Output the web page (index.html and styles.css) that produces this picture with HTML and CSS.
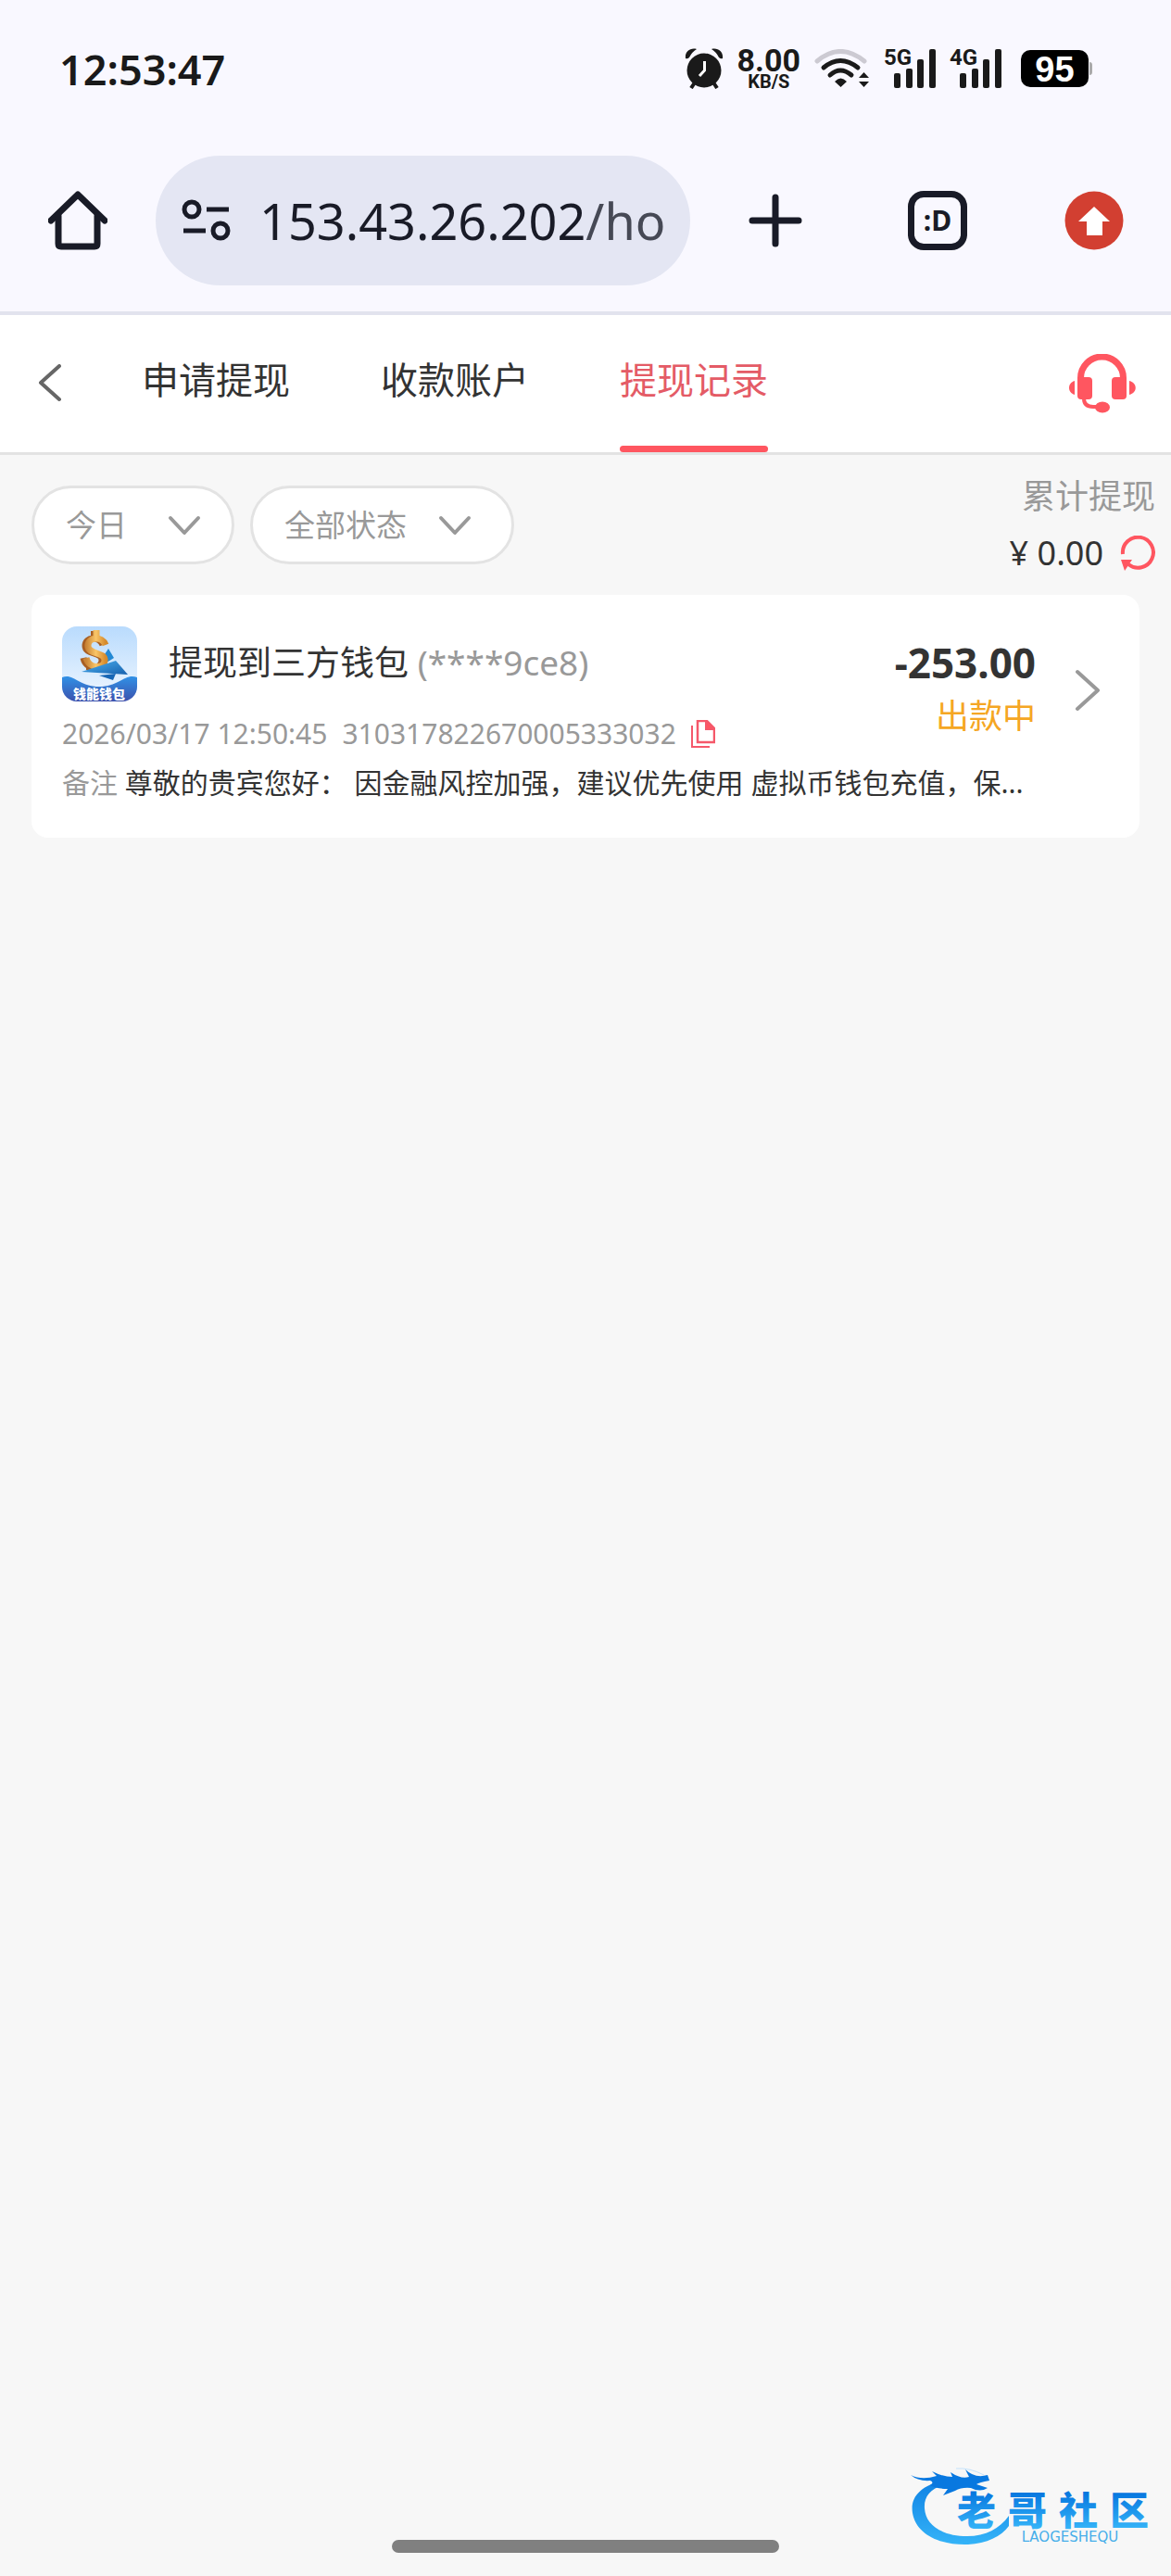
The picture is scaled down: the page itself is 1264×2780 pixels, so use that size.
FILE: index.html
```html
<!DOCTYPE html>
<html lang="zh-CN">
<head>
<meta charset="utf-8">
<meta name="viewport" content="width=device-width">
<title>提现记录</title>
<link rel="stylesheet" href="styles.css">
</head>
<body>
	<div class="statusbar">
		<span class="clock">12:53:47</span>
		<div class="statusIcons">
			<svg width="42" height="44" viewBox="0 0 42 44" fill="#1a1a1a">
				<circle cx="21" cy="24" r="18.5"/>
				<path d="M1 11C0 4 6-1 13 1Q8 4 5 10Q3 12 1 11ZM41 11C42 4 36-1 29 1Q34 4 37 10Q39 12 41 11Z"/>
				<path d="M11 37L7 43M31 37L35 43" stroke="#1a1a1a" stroke-width="4"/>
				<path d="M21.500 14V24L16 30" fill="none" stroke="#fff" stroke-width="3"/>
			</svg>
			<div class="netspeed"><b>8.00</b><span>KB/S</span></div>
			<svg class="wifi" width="60" height="42" viewBox="0 0 60 42" fill="none" stroke-width="5" stroke-linecap="round">
				<path d="M3 13Q28-8 54 13" stroke="#cccad2"/>
				<path d="M10 20Q28 5 47 20M17 28Q28 18 40 28" stroke="#1a1a1a"/>
				<path d="M22 35Q28.500 28 35 35L28.500 41ZM48 31L53.500 25L59 31ZM48 35L53.500 41L59 35Z" fill="#1a1a1a"/>
			</svg>
			<div class="signal">
				<span>5G</span>
				<svg width="56" height="44" viewBox="0 0 56 44" fill="#1a1a1a">
					<rect x="11" y="27" width="7" height="16" rx="2"/><rect x="24" y="22" width="7" height="21" rx="2"/>
					<rect x="36" y="12" width="7" height="31" rx="2"/><rect x="49" y="1" width="7" height="42" rx="2"/>
				</svg>
			</div>
			<div class="signal">
				<span>4G</span>
				<svg width="56" height="44" viewBox="0 0 56 44" fill="#1a1a1a">
					<rect x="11" y="27" width="7" height="16" rx="2"/><rect x="24" y="22" width="7" height="21" rx="2"/>
					<rect x="36" y="12" width="7" height="31" rx="2"/><rect x="49" y="1" width="7" height="42" rx="2"/>
				</svg>
			</div>
			<div class="battery">95</div>
		</div>
	</div>

	<div class="toolbar">
		<button class="iconButton" type="button" aria-label="主页">
			<svg width="64" height="64" viewBox="0 0 64 64" fill="none" stroke="#191b27" stroke-width="7" stroke-linejoin="round" stroke-linecap="round">
				<path d="M3 32L32 4L61 32"/><path d="M11 27V57Q11 60 14 60H50Q53 60 53 57V27"/>
			</svg>
		</button>
		<div class="address">
			<svg width="54" height="46" viewBox="0 0 54 46" fill="none" stroke="#191b27" stroke-width="5">
				<circle cx="11" cy="11" r="8"/><path d="M27 11H51M2 34H26"/><circle cx="42" cy="34" r="8"/>
			</svg>
			<a class="url" href="#">153.43.26.202<span>/ho</span></a>
		</div>
		<button class="iconButton plus" type="button" aria-label="新标签页">
			<svg width="64" height="64" viewBox="0 0 64 64" stroke="#191b27" stroke-width="7" stroke-linecap="round">
				<path d="M7 32H57M32 7V57"/>
			</svg>
		</button>
		<button class="iconButton tabs" type="button">:D</button>
		<button class="iconButton" type="button" aria-label="更新">
			<svg width="64" height="64" viewBox="0 0 64 64">
				<circle cx="32" cy="32" r="31.500" fill="#d23f31"/>
				<path d="M32 17L49 33H41V48H24V33H15Z" fill="#fff"/>
			</svg>
		</button>
	</div>

	<nav class="nav">
		<button class="iconButton back" type="button" aria-label="返回">
			<svg width="26" height="42" viewBox="0 0 26 42" fill="none" stroke="#666" stroke-width="4" stroke-linecap="round" stroke-linejoin="round">
				<path d="M23 2L3 20L23 38"/>
			</svg>
		</button>
		<div class="navLinks">
			<a href="#">申请提现</a>
			<a href="#">收款账户</a>
			<a class="active" href="#">提现记录</a>
		</div>
		<button class="iconButton" type="button" aria-label="客服">
			<svg width="72" height="64" viewBox="0 0 72 64" fill="#ff5660">
				<path d="M12.500 30V26A23 23 0 0 1 58.500 26V30" fill="none" stroke="#ff5660" stroke-width="7"/>
				<rect x="9" y="25" width="16" height="24" rx="4"/>
				<rect x="46" y="25" width="16" height="24" rx="4"/>
				<path d="M6 29V44C-2 42-2 31 6 29ZM65 29V44C74 42 74 31 65 29Z"/>
				<path d="M16 48Q16 57 26 57H32" fill="none" stroke="#ff5660" stroke-width="4"/>
				<ellipse cx="36" cy="57.500" rx="8" ry="6"/>
			</svg>
		</button>
	</nav>

	<main>
		<section class="filters">
			<div class="pills">
				<label class="pill day">
					<select aria-label="日期"><option>今日</option></select>
					<svg width="36" height="24" viewBox="0 0 36 24"><path d="M3 3L18 19L33 3"/></svg>
				</label>
				<label class="pill state">
					<select aria-label="状态"><option>全部状态</option></select>
					<svg width="36" height="24" viewBox="0 0 36 24"><path d="M3 3L18 19L33 3"/></svg>
				</label>
			</div>
			<div class="total">
				<span class="totalLabel">累计提现</span>
				<div class="totalSum">
					<span>¥ 0.00</span>
					<button class="iconButton" type="button" aria-label="刷新">
						<svg width="38" height="38" viewBox="0 0 38 38">
							<path d="M3 20A16.500 16.500 0 1 1 9 31" fill="none" stroke="#ff5660" stroke-width="4"/>
							<path d="M1 26H13L5 38Z" fill="#ff5660"/>
						</svg>
					</button>
				</div>
			</div>
		</section>

		<article class="record">
			<div class="recordBody">
				<div class="recordHead">
					<svg width="81" height="81" viewBox="0 0 81 81">
						<defs>
							<linearGradient id="sky" x1="0" y1="0" x2="0" y2="1"><stop offset="0" stop-color="#b9dbfd"/><stop offset="1" stop-color="#f0f7ff"/></linearGradient>
							<linearGradient id="sea" x1="0" y1="0" x2="0" y2="1"><stop offset="0" stop-color="#3191e6"/><stop offset="1" stop-color="#3c51ad"/></linearGradient>
							<linearGradient id="gold" x1="0" y1="0" x2="1" y2="0"><stop offset="0" stop-color="#c98436"/><stop offset=".5" stop-color="#f9c568"/><stop offset="1" stop-color="#d58a2c"/></linearGradient>
							<linearGradient id="sail" x1="0" y1="0" x2="1" y2="1"><stop offset="0" stop-color="#4cb2f2"/><stop offset="1" stop-color="#1660ad"/></linearGradient>
							<clipPath id="tile"><rect width="81" height="81" rx="16"/></clipPath>
						</defs>
						<g clip-path="url(#tile)">
							<rect width="81" height="81" fill="url(#sky)"/>
							<path d="M50 24L56 34L34 48Z" fill="#2389d4"/>
							<path d="M40 53L58 51L55 58Z" fill="#1666b5"/>
							<path d="M34 5V12M29 43V47" stroke="#a85f24" stroke-width="6"/>
							<path d="M44 20C40 10 25 11 25 21C25 31 44 27 43 37C42 46 26 48 23 34" fill="none" stroke="#a85f24" stroke-width="7"/>
							<path d="M37 4V13M47 20C43 10 28 11 28 21C28 31 47 27 46 37C45 46 29 46 26 34" fill="none" stroke="url(#gold)" stroke-width="7"/>
							<path d="M21 49L58 37L71 52Z" fill="url(#sail)"/>
							<path d="M0 55C12 50 18 65 40 65C62 65 68 50 81 55V81H0Z" fill="url(#sea)"/>
							<text class="tileName" x="40" y="78">钱能钱包</text>
						</g>
					</svg>
					<h2>提现到三方钱包 <span>(****9ce8)</span></h2>
				</div>
				<div class="recordMeta">
					<time>2026/03/17 12:50:45</time>
					<span>310317822670005333032</span>
					<button class="iconButton" type="button" aria-label="复制">
						<svg width="26" height="30" viewBox="0 0 26 30" fill="none" stroke="#f5586a" stroke-width="2">
							<path d="M7 1H17L25 9V24H7Z" stroke-width="2.500"/>
							<path d="M16 1L25 10H16Z" fill="#ff5660"/><path d="M1 6V29H20"/>
						</svg>
					</button>
				</div>
				<div class="recordAmount">
					<strong>-253.00</strong>
					<span>出款中</span>
				</div>
				<p class="recordNote"><span>备注</span> 尊敬的贵宾您好： 因金融风控加强，建议优先使用 虚拟币钱包充值，保...</p>
			</div>
			<button class="iconButton more" type="button" aria-label="详情">
				<svg width="28" height="46" viewBox="0 0 28 46" fill="none" stroke="#999" stroke-width="4" stroke-linecap="round" stroke-linejoin="round">
					<path d="M3 3L25 23L3 43"/>
				</svg>
			</button>
		</article>
	</main>

	<div class="handle"></div>

	<svg class="brand" width="264" height="92" viewBox="0 0 264 92">
		<defs>
			<linearGradient id="wave" gradientUnits="userSpaceOnUse" x1="0" y1="4" x2="0" y2="88"><stop offset="0" stop-color="#0878e0"/><stop offset="1" stop-color="#35b4f8"/></linearGradient>
			<linearGradient id="ink" gradientUnits="userSpaceOnUse" x1="0" y1="32" x2="0" y2="70"><stop offset="0" stop-color="#0878e0"/><stop offset="1" stop-color="#35b4f8"/></linearGradient>
		</defs>
		<path d="M42 16C14 22 0 34 3 53C7 77 34 88 63 87C83 86 99 78 107 67V56C97 70 82 78 62 78C35 78 17 66 16 48C15 34 24 24 46 20Z" fill="url(#wave)"/>
		<path d="M1 12Q13 18 29 13L24 8Q36 14 46 14L44 9Q56 17 64 14L60 6Q70 16 84 12L86 18Q75 20 72 22L84 26Q76 31 66 26Q56 25 49 29L36 34L41 27Q28 27 22 23Q27 20 22 18Q9 19 1 12Z" fill="#0878e0"/>
		<path d="M50 5Q65 4 80 12" fill="none" stroke="#c4e2fb"/>
		<g class="brandName">
			<text x="72" y="66">老</text><text x="127" y="66">哥</text><text x="182" y="66">社</text><text x="237" y="66">区</text>
		</g>
		<text class="brandSub" x="173" y="84">LAOGESHEQU</text>
	</svg>
</body>
</html>
```

FILE: styles.css
```css
*{
	box-sizing:border-box;
}
body{
	margin:0;
	min-height:100vh;
	display:flex;
	flex-direction:column;
	position:relative;
	background-color:#f7f7f7;
	color:#333;
	font-family:"Noto Sans", "Noto Sans CJK SC", sans-serif;
}
svg{
	display:block;
	flex-shrink:0;
}
a{
	color:inherit;
	text-decoration:none;
}
.iconButton{
	display:block;
	flex-shrink:0;
	padding:0;
	border:0;
	background:none;
	font-family:inherit;
}

/* phone status bar */
.statusbar{
	display:flex;
	justify-content:space-between;
	align-items:center;
	height:148px;
	padding:0 89px 0 64px;
	background-color:#f9f8ff;
	color:#1a1a1a;
}
.clock{
	font-size:45px;
	font-weight:600;
}
.statusIcons{
	display:flex;
	align-items:center;
	gap:15px;
}
.netspeed{
	display:flex;
	flex-direction:column;
	align-items:center;
	font-family:Roboto, sans-serif;
	font-weight:700;
	font-size:20px;
	line-height:18px;
}
.netspeed b{
	font-size:34px;
	font-weight:700;
	line-height:28px;
}
.signal{
	position:relative;
}
.signal span{
	position:absolute;
	left:0;
	top:0;
	font-family:Roboto, sans-serif;
	font-size:24px;
	font-weight:700;
	line-height:20px;
}
.battery{
	position:relative;
	width:73px;
	height:40px;
	margin-left:6px;
	border-radius:10px;
	background-color:#000;
	color:#fff;
	font-family:"Liberation Sans", sans-serif;
	font-size:38px;
	font-weight:700;
	line-height:42px;
	text-align:center;
}
.battery::after{
	content:"";
	position:absolute;
	left:74px;
	top:13px;
	width:3px;
	height:14px;
	border-radius:0 3px 3px 0;
	background-color:#aaa;
}

/* browser toolbar */
.toolbar{
	display:flex;
	align-items:center;
	padding:20px 51px 28px 52px;
	border-bottom:4px solid #e2e3ee;
	background-color:#f9f8ff;
}
.address{
	display:flex;
	align-items:center;
	flex:1;
	min-width:0;
	height:140px;
	margin:0 60px 0 52px;
	padding:0 26px 0 28px;
	gap:30px;
	border-radius:70px;
	background-color:#e4e6f3;
	color:#191b27;
	overflow:hidden;
}
.url{
	font-size:54px;
	white-space:nowrap;
}
.url span{
	color:#464955;
}
.plus{
	margin-right:111px;
}
.tabs{
	width:64px;
	height:64px;
	margin-right:105px;
	border:7px solid #191b27;
	border-radius:17px;
	color:#191b27;
	font-size:30px;
	font-weight:700;
	line-height:48px;
}

/* page tabs */
.nav{
	display:flex;
	align-items:center;
	height:151px;
	padding:0 38px 0 41px;
	border-bottom:3px solid #e3e3e3;
	background-color:#fff;
}
.navLinks{
	display:flex;
	flex:1;
	align-self:stretch;
	gap:98px;
	margin-left:86px;
}
.navLinks a{
	padding-bottom:1px;
	border-bottom:7px solid transparent;
	font-size:40px;
	line-height:140px;
}
.navLinks .active{
	position:relative;
	color:#e45b66;
}
.navLinks .active::after{
	content:"";
	position:absolute;
	left:0;
	right:0;
	bottom:-7px;
	height:7px;
	border-radius:4px;
	background-color:#ff5660;
}

/* filters and total */
.filters{
	display:flex;
	justify-content:space-between;
	align-items:flex-start;
	padding:14px 17px 0 34px;
}
.pills{
	display:flex;
	gap:17px;
	padding-top:19px;
}
.pill{
	position:relative;
	display:block;
}
.pill select{
	width:100%;
	height:85px;
	padding:0 0 0 34px;
	appearance:none;
	border:3px solid #e3e3e3;
	border-radius:43px;
	background-color:#fff;
	color:#999;
	font-family:inherit;
	font-size:33px;
}
.day{
	width:219px;
}
.state{
	width:285px;
}
.pill svg{
	position:absolute;
	right:36px;
	top:32px;
	fill:none;
	stroke:#999;
	stroke-width:4;
	stroke-linecap:round;
	stroke-linejoin:round;
	pointer-events:none;
}
.state svg{
	right:46px;
}
.total{
	display:flex;
	flex-direction:column;
	align-items:flex-end;
	font-size:36px;
	line-height:61px;
}
.totalLabel{
	color:#999;
}
.totalSum{
	display:flex;
	align-items:center;
	gap:18px;
}

/* record card */
.record{
	display:flex;
	align-items:flex-start;
	gap:42px;
	margin:15px 34px 0;
	padding:34px 42px 39px 33px;
	border-radius:18px;
	background-color:#fff;
}
.recordBody{
	display:grid;
	grid-template-columns:1fr auto;
	grid-template-areas:"head amount" "meta amount" "note note";
	flex:1;
	min-width:0;
}
.recordHead{
	grid-area:head;
	display:flex;
	align-items:center;
	gap:34px;
}
.recordHead h2{
	margin:0;
	font-size:37px;
	font-weight:400;
	line-height:40px;
	padding-bottom:4px;
}
.recordHead h2 span{
	color:#999;
}
.tileName{
	fill:#fff;
	font-size:14px;
	font-weight:900;
	text-anchor:middle;
}
.recordMeta{
	grid-area:meta;
	display:flex;
	align-items:center;
	gap:16px;
	margin-top:15px;
	color:#999;
	font-size:30px;
	line-height:40px;
}
.recordAmount{
	grid-area:amount;
	display:flex;
	flex-direction:column;
	align-items:flex-end;
	padding-top:10px;
	font-size:36px;
	line-height:58px;
}
.recordAmount strong{
	font-size:44px;
}
.recordAmount span{
	color:#f5a623;
}
.recordNote{
	grid-area:note;
	margin:13px 0 0;
	font-size:30px;
	line-height:40px;
	white-space:nowrap;
	overflow:hidden;
}
.recordNote span{
	color:#999;
}
.more{
	height:138px;
}

.handle{
	width:33%;
	height:14px;
	margin:auto auto 25px;
	border-radius:7px;
	background-color:#808080;
}
.brand{
	position:absolute;
	right:18px;
	bottom:29px;
}
.brandName{
	fill:url(#ink);
	font-size:42px;
	font-weight:900;
	text-anchor:middle;
}
.brandSub{
	fill:#46aeea;
	font-family:"DejaVu Sans", sans-serif;
	font-size:15px;
	text-anchor:middle;
}
```
